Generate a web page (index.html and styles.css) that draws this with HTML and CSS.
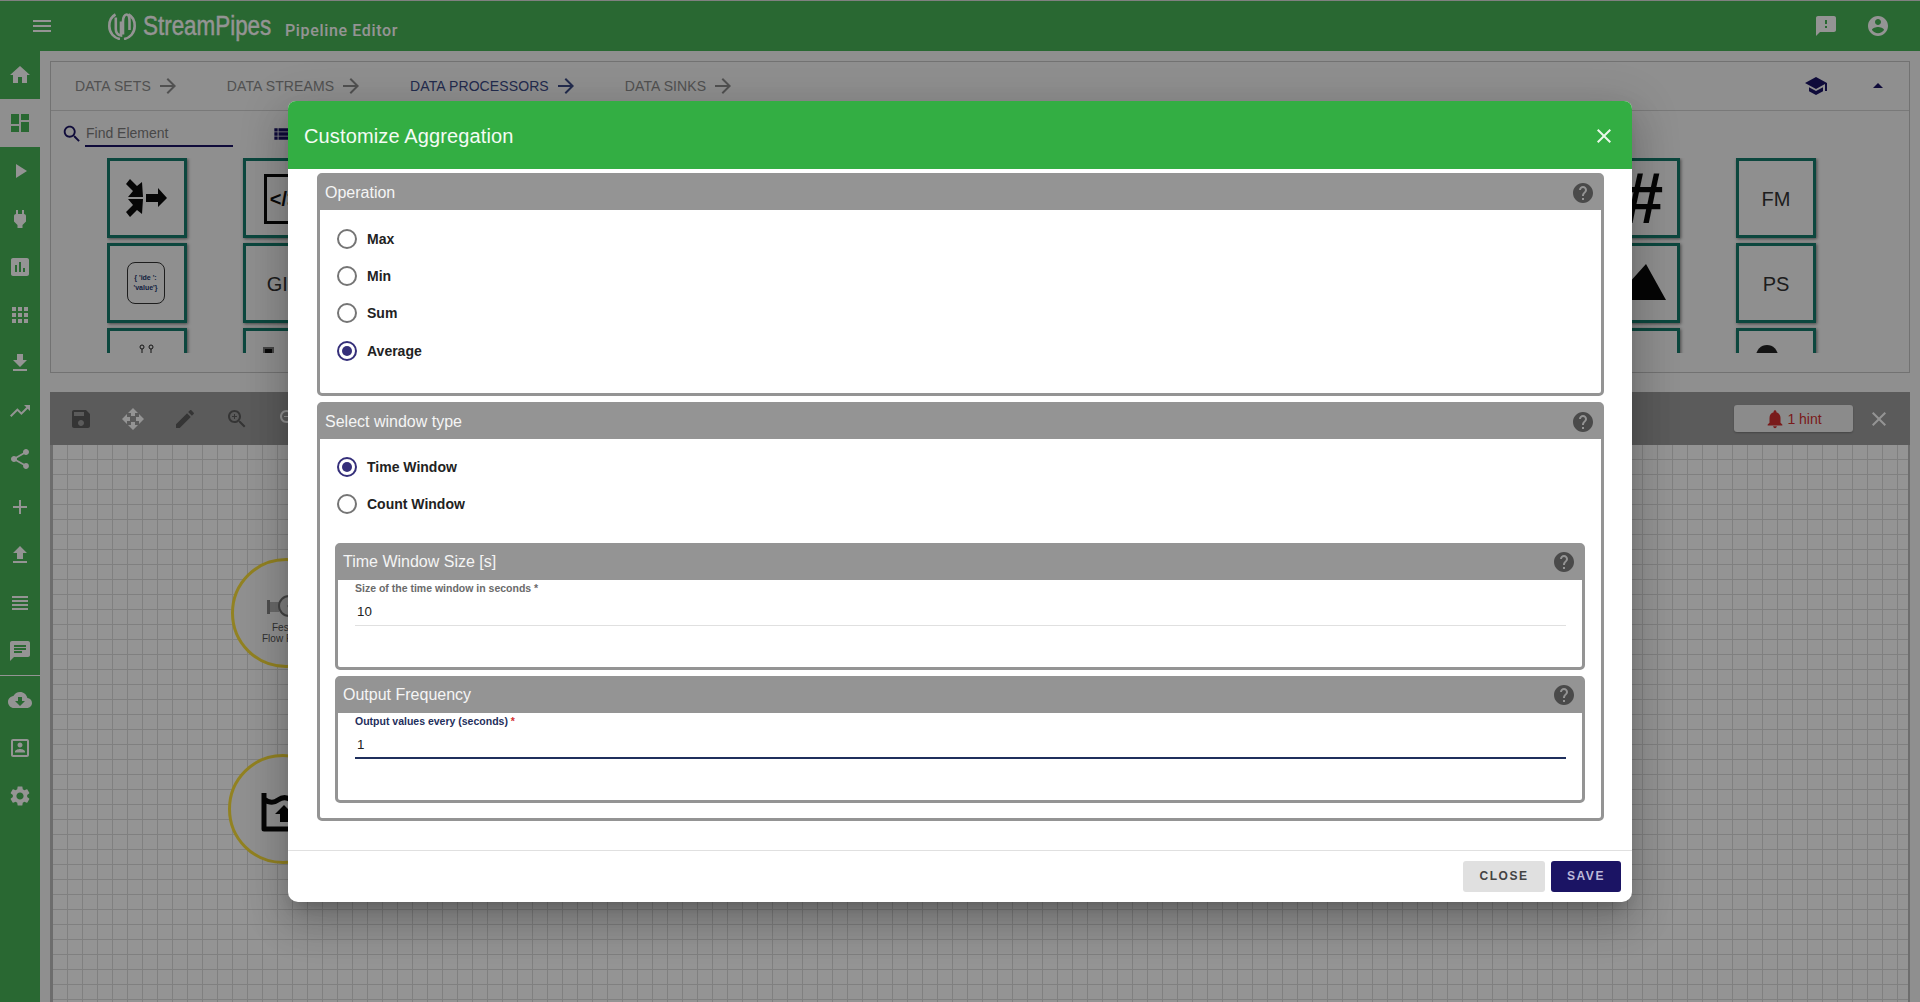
FILE: index.html
```html
<!DOCTYPE html>
<html lang="en">
<head>
<meta charset="utf-8">
<title>StreamPipes Pipeline Editor</title>
<link rel="stylesheet" href="styles.css">
</head>
<body>
<svg class="defs" width="0" height="0" aria-hidden="true">
  <symbol id="i-menu" viewBox="0 0 24 24"><path d="M3 18h18v-2H3v2zm0-5h18v-2H3v2zm0-7v2h18V6H3z"/></symbol>
  <symbol id="i-home" viewBox="0 0 24 24"><path d="M10 20v-6h4v6h5v-8h3L12 3 2 12h3v8z"/></symbol>
  <symbol id="i-dash" viewBox="0 0 24 24"><path d="M3 13h8V3H3v10zm0 8h8v-6H3v6zm10 0h8V11h-8v10zm0-18v6h8V3h-8z"/></symbol>
  <symbol id="i-play" viewBox="0 0 24 24"><path d="M8 5v14l11-7z"/></symbol>
  <symbol id="i-power" viewBox="0 0 24 24"><path d="M16.01 7L16 3h-2v4h-4V3H8v4h-.01C7 6.99 6 7.99 6 8.99v5.49L9.5 18v3h5v-3l3.5-3.51v-5.5c0-1-1-2-1.99-1.99z"/></symbol>
  <symbol id="i-chart" viewBox="0 0 24 24"><path d="M19 3H5c-1.1 0-2 .9-2 2v14c0 1.1.9 2 2 2h14c1.1 0 2-.9 2-2V5c0-1.1-.9-2-2-2zM9 17H7v-7h2v7zm4 0h-2V7h2v10zm4 0h-2v-4h2v4z"/></symbol>
  <symbol id="i-apps" viewBox="0 0 24 24"><path d="M4 8h4V4H4v4zm6 12h4v-4h-4v4zm-6 0h4v-4H4v4zm0-6h4v-4H4v4zm6 0h4v-4h-4v4zm6-10v4h4V4h-4zm-6 4h4V4h-4v4zm6 6h4v-4h-4v4zm0 6h4v-4h-4v4z"/></symbol>
  <symbol id="i-down" viewBox="0 0 24 24"><path d="M19 9h-4V3H9v6H5l7 7 7-7zM5 18v2h14v-2H5z"/></symbol>
  <symbol id="i-trend" viewBox="0 0 24 24"><path d="M16 6l2.29 2.29-4.88 4.88-4-4L2 16.59 3.41 18l6-6 4 4 6.3-6.29L22 12V6z"/></symbol>
  <symbol id="i-share" viewBox="0 0 24 24"><path d="M18 16.08c-.76 0-1.44.3-1.96.77L8.91 12.7c.05-.23.09-.46.09-.7s-.04-.47-.09-.7l7.05-4.11c.54.5 1.25.81 2.04.81 1.66 0 3-1.34 3-3s-1.34-3-3-3-3 1.34-3 3c0 .24.04.47.09.7L8.04 9.81C7.5 9.31 6.79 9 6 9c-1.66 0-3 1.34-3 3s1.34 3 3 3c.79 0 1.5-.31 2.04-.81l7.12 4.16c-.05.21-.08.43-.08.65 0 1.61 1.31 2.92 2.92 2.92 1.61 0 2.92-1.31 2.92-2.92s-1.31-2.92-2.92-2.92z"/></symbol>
  <symbol id="i-add" viewBox="0 0 24 24"><path d="M19 13h-6v6h-2v-6H5v-2h6V5h2v6h6v2z"/></symbol>
  <symbol id="i-up" viewBox="0 0 24 24"><path d="M9 16h6v-6h4l-7-7-7 7h4zm-4 2h14v2H5z"/></symbol>
  <symbol id="i-lines" viewBox="0 0 24 24"><path d="M4 15h16v-2H4v2zm0 4h16v-2H4v2zm0-8h16V9H4v2zm0-6v2h16V5H4z"/></symbol>
  <symbol id="i-chat" viewBox="0 0 24 24"><path d="M20 2H4c-1.100 0-1.990.9-1.990 2L2 22l4-4h14c1.100 0 2-.9 2-2V4c0-1.100-.9-2-2-2zM6 9h12v2H6V9zm8 5H6v-2h8v2zm4-6H6V6h12v2z"/></symbol>
  <symbol id="i-cloud" viewBox="0 0 24 24"><path d="M19.350 10.040C18.670 6.590 15.640 4 12 4 9.110 4 6.600 5.640 5.350 8.040 2.340 8.360 0 10.910 0 14c0 3.310 2.690 6 6 6h13c2.760 0 5-2.240 5-5 0-2.640-2.050-4.780-4.650-4.960zM17 13l-5 5-5-5h3V9h4v4h3z"/></symbol>
  <symbol id="i-portrait" viewBox="0 0 24 24"><path d="M19 3H5c-1.100 0-2 .9-2 2v14c0 1.100.9 2 2 2h14c1.100 0 2-.9 2-2V5c0-1.100-.9-2-2-2zm0 16H5V5h14v14zM12 11.500c1.400 0 2.500-1.100 2.500-2.500S13.400 6.500 12 6.500 9.500 7.600 9.500 9s1.100 2.500 2.500 2.500zm5 5v-1c0-1.700-3.300-2.600-5-2.600s-5 .9-5 2.600v1z"/></symbol>
  <symbol id="i-gear" viewBox="0 0 24 24"><path d="M19.140 12.940c.04-.3.06-.61.06-.94 0-.32-.02-.64-.07-.94l2.030-1.580c.18-.14.23-.41.12-.61l-1.920-3.320c-.12-.22-.37-.29-.59-.22l-2.390.96c-.5-.38-1.030-.7-1.620-.94l-.36-2.540c-.04-.24-.24-.41-.48-.41h-3.840c-.24 0-.43.17-.47.41l-.36 2.540c-.59.24-1.130.57-1.620.94l-2.390-.96c-.22-.08-.47 0-.59.22L2.740 8.870c-.12.21-.08.47.12.61l2.030 1.580c-.05.3-.09.63-.09.94s.02.64.07.94l-2.030 1.580c-.18.14-.23.41-.12.61l1.920 3.320c.12.22.37.29.59.22l2.390-.96c.5.38 1.030.7 1.620.94l.36 2.540c.05.24.24.41.48.41h3.840c.24 0 .44-.17.47-.41l.36-2.540c.59-.24 1.130-.56 1.620-.94l2.390.96c.22.08.47 0 .59-.22l1.920-3.320c.12-.22.07-.47-.12-.61l-2.010-1.580zM12 15.600c-1.980 0-3.600-1.620-3.600-3.600s1.620-3.600 3.600-3.600 3.600 1.620 3.600 3.600-1.620 3.600-3.600 3.600z"/></symbol>
  <symbol id="i-feedback" viewBox="0 0 24 24"><path d="M20 2H4c-1.100 0-1.990.9-1.990 2L2 22l4-4h14c1.100 0 2-.9 2-2V4c0-1.100-.9-2-2-2zm-7 12h-2v-2h2v2zm0-4h-2V6h2v4z"/></symbol>
  <symbol id="i-account" viewBox="0 0 24 24"><path d="M12 2C6.480 2 2 6.480 2 12s4.480 10 10 10 10-4.480 10-10S17.520 2 12 2zm0 3c1.660 0 3 1.340 3 3s-1.340 3-3 3-3-1.340-3-3 1.340-3 3-3zm0 14.200c-2.500 0-4.710-1.280-6-3.220.03-1.990 4-3.080 6-3.080 1.990 0 5.970 1.090 6 3.080-1.290 1.940-3.500 3.220-6 3.220z"/></symbol>
  <symbol id="i-school" viewBox="0 0 24 24"><path d="M5 13.180v4L12 21l7-3.820v-4L12 17l-7-3.820zM12 3L1 9l11 6 9-4.910V17h2V9L12 3z"/></symbol>
  <symbol id="i-caret" viewBox="0 0 24 24"><path d="M7 14l5-5 5 5z"/></symbol>
  <symbol id="i-arrow" viewBox="0 0 24 24"><path d="M12 4l-1.410 1.410L16.170 11H4v2h12.170l-5.580 5.590L12 20l8-8z"/></symbol>
  <symbol id="i-search" viewBox="0 0 24 24"><path d="M15.500 14h-.79l-.28-.27C15.410 12.590 16 11.110 16 9.500 16 5.910 13.090 3 9.500 3S3 5.910 3 9.500 5.910 16 9.500 16c1.610 0 3.090-.59 4.230-1.570l.27.28v.79l5 4.990L20.490 19l-4.990-5zm-6 0C7.010 14 5 11.990 5 9.500S7.010 5 9.500 5 14 7.010 14 9.500 11.990 14 9.500 14z"/></symbol>
  <symbol id="i-list" viewBox="0 0 24 24"><path d="M4 14h4v-4H4v4zm0 5h4v-4H4v4zM4 9h4V5H4v4zm5 5h12v-4H9v4zm0 5h12v-4H9v4zM9 5v4h12V5H9z"/></symbol>
  <symbol id="i-close" viewBox="0 0 24 24"><path d="M19 6.410L17.590 5 12 10.590 6.410 5 5 6.410 10.590 12 5 17.590 6.410 19 12 13.410 17.590 19 19 17.590 13.410 12z"/></symbol>
  <symbol id="i-help" viewBox="0 0 24 24"><path d="M12 2C6.480 2 2 6.480 2 12s4.480 10 10 10 10-4.480 10-10S17.520 2 12 2zm1 17h-2v-2h2v2zm2.070-7.750l-.9.920C13.450 12.900 13 13.500 13 15h-2v-.5c0-1.100.45-2.100 1.170-2.830l1.240-1.260c.37-.36.59-.86.59-1.410 0-1.100-.9-2-2-2s-2 .9-2 2H8c0-2.210 1.790-4 4-4s4 1.790 4 4c0 .88-.36 1.680-.93 2.250z"/></symbol>
  <symbol id="i-save" viewBox="0 0 24 24"><path d="M17 3H5c-1.110 0-2 .9-2 2v14c0 1.100.89 2 2 2h14c1.100 0 2-.9 2-2V7l-4-4zm-5 16c-1.660 0-3-1.340-3-3s1.340-3 3-3 3 1.340 3 3-1.340 3-3 3zm3-10H5V5h10v4z"/></symbol>
  <symbol id="i-move" viewBox="0 0 24 24"><path d="M10 9h4V6h3l-5-5-5 5h3v3zm-1 1H6V7l-5 5 5 5v-3h3v-4zm14 2l-5-5v3h-3v4h3v3l5-5zm-9 3h-4v3H7l5 5 5-5h-3v-3z"/></symbol>
  <symbol id="i-edit" viewBox="0 0 24 24"><path d="M3 17.250V21h3.750L17.810 9.940l-3.750-3.750L3 17.250zM20.710 7.040c.39-.39.39-1.020 0-1.410l-2.340-2.340c-.39-.39-1.020-.39-1.410 0l-1.830 1.830 3.750 3.750 1.830-1.830z"/></symbol>
  <symbol id="i-zoomin" viewBox="0 0 24 24"><path d="M15.500 14h-.79l-.28-.27C15.410 12.590 16 11.110 16 9.500 16 5.910 13.090 3 9.500 3S3 5.910 3 9.500 5.910 16 9.500 16c1.610 0 3.090-.59 4.230-1.570l.27.28v.79l5 4.990L20.490 19l-4.990-5zm-6 0C7.010 14 5 11.990 5 9.500S7.010 5 9.500 5 14 7.010 14 9.500 11.990 14 9.500 14zM12 10h-2v2H9v-2H7V9h2V7h1v2h2v1z"/></symbol>
  <symbol id="i-zoomout" viewBox="0 0 24 24"><path d="M15.500 14h-.79l-.28-.27C15.410 12.590 16 11.110 16 9.500 16 5.910 13.090 3 9.500 3S3 5.910 3 9.500 5.910 16 9.500 16c1.610 0 3.090-.59 4.230-1.570l.27.28v.79l5 4.990L20.490 19l-4.990-5zm-6 0C7.010 14 5 11.990 5 9.500S7.010 5 9.500 5 14 7.010 14 9.500 11.990 14 9.500 14zM7 9h5v1H7z"/></symbol>
  <symbol id="i-bell" viewBox="0 0 24 24"><path d="M12 22c1.100 0 2-.9 2-2h-4c0 1.100.89 2 2 2zm6-6v-5c0-3.070-1.640-5.640-4.500-6.320V4c0-.83-.67-1.500-1.500-1.500s-1.500.67-1.500 1.500v.68C7.630 5.360 6 7.920 6 11v5l-2 2v1h16v-1l-2-2z"/></symbol>
</svg>

<div class="app">
  <header class="topbar">
    <button class="bar-btn menu-btn"><svg class="ic"><use href="#i-menu"/></svg></button>
    <div class="brand">
      <svg class="logo" viewBox="0 0 28 28"><g fill="none" stroke="currentColor" stroke-width="2.600"><path d="M7.500 2.500C3.500 4.500 1.300 8.500 1.300 14c0 7 4.700 12 10.700 13"/><path d="M20.500 2.500C24.500 4.500 26.700 8.500 26.700 14c0 7-4.700 12-10.700 13"/><path d="M7.800 5.500V17c0 3.500 2.200 6 5.200 6.500V9.500"/><path d="M15 22.500V9c0-3.500 1.700-6.500 3.500-6.500S21.500 5.500 21.500 9v9"/></g></svg>
      <span class="brand-name">StreamPipes</span>
    </div>
    <span class="page-title">Pipeline Editor</span>
    <div class="top-actions">
      <svg class="ic"><use href="#i-feedback"/></svg>
      <svg class="ic"><use href="#i-account"/></svg>
    </div>
  </header>

  <div class="main">
    <nav class="sidebar">
      <a class="nav-item"><svg class="ic"><use href="#i-home"/></svg></a>
      <a class="nav-item active"><svg class="ic"><use href="#i-dash"/></svg></a>
      <a class="nav-item"><svg class="ic"><use href="#i-play"/></svg></a>
      <a class="nav-item"><svg class="ic"><use href="#i-power"/></svg></a>
      <a class="nav-item"><svg class="ic"><use href="#i-chart"/></svg></a>
      <a class="nav-item"><svg class="ic"><use href="#i-apps"/></svg></a>
      <a class="nav-item"><svg class="ic"><use href="#i-down"/></svg></a>
      <a class="nav-item"><svg class="ic"><use href="#i-trend"/></svg></a>
      <a class="nav-item"><svg class="ic"><use href="#i-share"/></svg></a>
      <a class="nav-item"><svg class="ic"><use href="#i-add"/></svg></a>
      <a class="nav-item"><svg class="ic"><use href="#i-up"/></svg></a>
      <a class="nav-item"><svg class="ic"><use href="#i-lines"/></svg></a>
      <a class="nav-item"><svg class="ic"><use href="#i-chat"/></svg></a>
      <div class="nav-divider"></div>
      <a class="nav-item"><svg class="ic"><use href="#i-cloud"/></svg></a>
      <a class="nav-item"><svg class="ic"><use href="#i-portrait"/></svg></a>
      <a class="nav-item"><svg class="ic"><use href="#i-gear"/></svg></a>
    </nav>

    <main class="content">
      <section class="palette">
        <div class="tabs">
          <span class="tab">DATA SETS <svg class="ic"><use href="#i-arrow"/></svg></span>
          <span class="tab">DATA STREAMS <svg class="ic"><use href="#i-arrow"/></svg></span>
          <span class="tab tab-active">DATA PROCESSORS <svg class="ic"><use href="#i-arrow"/></svg></span>
          <span class="tab">DATA SINKS <svg class="ic"><use href="#i-arrow"/></svg></span>
          <span class="tab-tools">
            <svg class="ic navy"><use href="#i-school"/></svg>
            <svg class="ic navy"><use href="#i-caret"/></svg>
          </span>
        </div>
        <div class="search-row">
          <svg class="ic navy search-ic"><use href="#i-search"/></svg>
          <span class="search-input">Find Element</span>
          <svg class="ic navy list-ic"><use href="#i-list"/></svg>
        </div>
        <div class="tiles">
          <div class="tile c1">
            <svg class="tile-svg" viewBox="0 0 42 38"><path d="M0 5L4 0l7 7 5-4 1 15H2l5-6zM0 33l4 5 7-7 5 4 1-15H2l5 6z" fill="#0c0c0c"/><path d="M0 19h18" stroke="#f6f6f6" stroke-width="2"/><path d="M20 15h12V9l9 10-9 9v-5H20z" fill="#0c0c0c"/></svg>
          </div>
          <div class="tile c2"><span class="code-box">&lt;/&gt;</span></div>
          <div class="tile c12"><span class="tile-hash">#</span></div>
          <div class="tile c13"><span class="tile-text">FM</span></div>

          <div class="tile c1"><span class="json-box">{ 'ide ':<br>'value'}</span></div>
          <div class="tile c2"><span class="tile-text gi">GI</span></div>
          <div class="tile c12"><svg class="mountain" viewBox="0 0 66 36"><path d="M0 36L20 10l8 10L46 0l20 36z" fill="#0c0c0c"/></svg></div>
          <div class="tile c13"><span class="tile-text">PS</span></div>

          <div class="tile c1"><svg class="pins" viewBox="0 0 20 10"><circle cx="5" cy="3" r="2" fill="none" stroke="#222"/><path d="M5 5v5" stroke="#222"/><circle cx="14" cy="3" r="2" fill="none" stroke="#222"/><path d="M14 5v5" stroke="#222"/></svg></div>
          <div class="tile c2"><span class="mini-square"></span></div>
          <div class="tile c12"></div>
          <div class="tile c13"><span class="dome"></span></div>
        </div>
      </section>

      <section class="editor">
        <div class="toolbar">
          <svg class="ic tool dark"><use href="#i-save"/></svg>
          <svg class="ic tool"><use href="#i-move"/></svg>
          <svg class="ic tool dark"><use href="#i-edit"/></svg>
          <svg class="ic tool dark"><use href="#i-zoomin"/></svg>
          <svg class="ic tool"><use href="#i-zoomout"/></svg>
          <span class="hint"><svg class="ic ic-bell"><use href="#i-bell"/></svg>1 hint</span>
          <svg class="ic tool-close"><use href="#i-close"/></svg>
        </div>
        <div class="canvas">
          <div class="node node-a">
            <svg class="node-pipe" viewBox="0 0 40 24"><rect x="0" y="6" width="3" height="14" fill="#888"/><rect x="3" y="8" width="9" height="10" fill="#b5b5b5"/><circle cx="22" cy="12" r="10" fill="#ddd" stroke="#777" stroke-width="2"/><circle cx="22" cy="12" r="1.500" fill="#555"/></svg>
            <span class="node-label">Festo<br>Flow Rate</span>
          </div>
          <div class="node node-b">
            <svg class="node-tank" viewBox="0 0 48 42"><path d="M3 2v36h40V8c-5 4-10 4-13 1-4-3-9-3-13 0-4 3-9 3-14-1" fill="none" stroke="#0c0c0c" stroke-width="5" stroke-linejoin="round"/><path d="M23 14l9 9h-5v8h-8v-8h-5z" fill="#0c0c0c"/></svg>
          </div>
        </div>
      </section>
    </main>
  </div>
</div>

<div class="backdrop"></div>

<div class="dialog">
  <div class="dialog-title">
    <span class="dialog-name">Customize Aggregation</span>
    <svg class="ic dialog-close"><use href="#i-close"/></svg>
  </div>
  <div class="dialog-body">
    <section class="group group-first">
      <div class="group-head"><span>Operation</span><svg class="ic help"><use href="#i-help"/></svg></div>
      <div class="group-content">
        <div class="radios">
          <label class="radio"><span class="dot"></span>Max</label>
          <label class="radio"><span class="dot"></span>Min</label>
          <label class="radio"><span class="dot"></span>Sum</label>
          <label class="radio on"><span class="dot"></span>Average</label>
        </div>
      </div>
    </section>
    <section class="group">
      <div class="group-head"><span>Select window type</span><svg class="ic help"><use href="#i-help"/></svg></div>
      <div class="group-content group-content-padded">
        <div class="radios radios-window">
          <label class="radio on"><span class="dot"></span>Time Window</label>
          <label class="radio"><span class="dot"></span>Count Window</label>
        </div>
        <section class="group sub">
          <div class="group-head"><span>Time Window Size [s]</span><svg class="ic help"><use href="#i-help"/></svg></div>
          <div class="field">
            <span class="field-label">Size of the time window in seconds <i>*</i></span>
            <span class="field-value">10</span>
          </div>
        </section>
        <section class="group sub">
          <div class="group-head"><span>Output Frequency</span><svg class="ic help"><use href="#i-help"/></svg></div>
          <div class="field focused">
            <span class="field-label">Output values every (seconds) <i>*</i></span>
            <span class="field-value">1</span>
          </div>
        </section>
      </div>
    </section>
  </div>
  <div class="dialog-actions">
    <button class="btn btn-close">CLOSE</button>
    <button class="btn btn-save">SAVE</button>
  </div>
</div>
</body>
</html>
```

FILE: styles.css
```css
* { box-sizing: border-box; }
html, body { margin: 0; height: 100%; overflow: hidden; }
body { font-family: "Liberation Sans", Arial, sans-serif; background: #f6f6f6; color: #222; position: relative; }
.defs { position: absolute; }
.ic { width: 24px; height: 24px; fill: currentColor; flex: none; display: block; }
.navy { color: #1b1464; }

.app { display: flex; flex-direction: column; height: 1002px; }
.topbar { height: 51px; flex: none; background: #47b356; border-top: 1px solid #ddd; color: #fff; display: flex; align-items: center; }
.bar-btn { background: none; border: 0; color: inherit; padding: 0; }
.menu-btn { margin-left: 30px; width: 24px; height: 24px; }
.brand { margin-left: 54px; display: flex; align-items: center; width: 177px; }
.logo { width: 28px; height: 28px; margin-right: 7px; flex: none; }
.brand-name { font-size: 27px; -webkit-text-stroke: .4px currentColor; transform: scaleX(.83); transform-origin: left center; white-space: nowrap; }
.page-title { font-family: Roboto, sans-serif; font-weight: 500; font-size: 16px; letter-spacing: .65px; margin-top: 8px; }
.top-actions { margin-left: auto; margin-right: 30px; display: flex; gap: 28px; }

.main { flex: 1; display: flex; min-height: 0; }
.sidebar { width: 40px; flex: none; background: #47b356; color: #fff; }
.nav-item { height: 48px; display: flex; align-items: center; justify-content: center; }
.nav-item.active { background: #f6f6f6; color: #47b356; }
.nav-divider { height: 1px; background: #fff; }

.content { flex: 1; min-width: 0; padding: 10px 10px 0; display: flex; flex-direction: column; gap: 19px; }
.palette { height: 312px; flex: none; border: 1px solid #c4c4c4; display: flex; flex-direction: column; }
.tabs { height: 49px; flex: none; border-bottom: 1px solid #d0d0d0; display: flex; align-items: center; padding-left: 24px; gap: 47px; }
.tab { display: flex; align-items: center; gap: 5px; font-size: 14px; letter-spacing: .1px; color: #8c8c8c; white-space: nowrap; }
.tab-active { color: #3b4a86; }
.tab-tools { margin-left: auto; margin-right: 19px; display: flex; gap: 38px; }
.search-row { height: 47px; flex: none; display: flex; align-items: center; padding-left: 10px; }
.search-ic { width: 22px; height: 22px; margin-top: -2px; }
.search-input { width: 148px; margin-left: 2px; height: 24px; border-bottom: 2px solid #1b1464; font-size: 14px; line-height: 20px; color: #7d7d7d; padding-left: 1px; }
.list-ic { margin-left: 38px; width: 20px; height: 20px; margin-top: -2px; }

.tiles { display: grid; grid-template-columns: repeat(13, 80px); column-gap: 55.750px; row-gap: 5px; grid-auto-rows: 80px; margin-left: 56px; height: 195px; overflow: hidden; }
.tile { border: 3px solid #157a6c; box-shadow: 1px 1px 3px rgba(0,0,0,.5); display: flex; align-items: center; justify-content: center; overflow: hidden; position: relative; }
.c1 { grid-column: 1; }
.c2 { grid-column: 2; }
.c12 { grid-column: 12; }
.c13 { grid-column: 13; }
.tile-svg { width: 42px; height: 38px; }
.tile-text { font-size: 20px; color: #333; margin-top: 3px; }
.gi { margin-right: auto; margin-left: 21px; }
.tile-hash { font-size: 72px; font-weight: 700; color: #0c0c0c; line-height: 1; margin-left: 6px; }
.code-box { width: 50px; height: 50px; border: 3px solid #0c0c0c; font-size: 20px; font-weight: 700; color: #111; display: flex; align-items: center; justify-content: flex-start; padding-left: 3px; margin-left: 12px; margin-top: 2px; }
.json-box { width: 38px; height: 42px; border: 1px solid #333; border-radius: 8px; font-size: 7px; font-weight: 700; color: #24386e; line-height: 10px; text-align: center; display: flex; align-items: center; justify-content: center; margin-left: -3px; }
.mountain { width: 66px; height: 36px; margin-left: -14px; margin-top: -3px; }
.pins { width: 20px; height: 10px; align-self: flex-start; margin-top: 13px; }
.mini-square { width: 11px; height: 9px; background: #111; border: 2px solid #777; position: absolute; top: 16px; left: 17px; }
.dome { width: 22px; height: 22px; border-radius: 50%; background: #222; position: absolute; top: 14px; left: 17px; }

.editor { flex: 1; display: flex; flex-direction: column; min-height: 0; }
.toolbar { height: 53px; flex: none; background: #9e9e9e; display: flex; align-items: center; padding-left: 19px; color: #fff; }
.tool { margin-right: 28px; }
.tool.dark { color: #5c5c5c; }
.hint { margin-left: auto; width: 119px; height: 27px; border-radius: 3px; background: #efefef; box-shadow: 0 1px 2px rgba(0,0,0,.25); color: #d32f2f; font-size: 14px; display: flex; align-items: center; justify-content: center; padding-left: 2px; }
.ic-bell { color: #d32f2f; width: 22px; height: 22px; margin-left: -3px; margin-right: 1px; }
.tool-close { margin: 0 19px 0 14px; }
.canvas { flex: 1; position: relative; border: solid #bcbcbc; border-width: 0 2px 0 3px; background-color: #fff; background-image: linear-gradient(#dcdcdc 1px, transparent 1px), linear-gradient(90deg, #dcdcdc 1px, transparent 1px); background-size: 15px 15px; background-position: -1px 14px; }
.node { position: absolute; width: 110px; height: 110px; border: 3px solid #fbe13c; border-radius: 50%; background: #f8f8f8; }
.node-a { left: 178px; top: 113px; }
.node-b { left: 175px; top: 309px; }
.node-pipe { position: absolute; left: 33px; top: 33px; width: 40px; height: 24px; }
.node-label { position: absolute; left: 28px; top: 61px; font-size: 10px; line-height: 11px; color: #555; text-align: center; white-space: nowrap; }
.node-tank { position: absolute; left: 30px; top: 34px; width: 48px; height: 42px; }

.backdrop { position: absolute; inset: 0; background: rgba(0,0,0,.42); }

.dialog { position: absolute; left: 288px; top: 101px; width: 1344px; height: 801px; background: #fff; border-radius: 8px 8px 10px 10px; box-shadow: 0 11px 15px -7px rgba(0,0,0,.2), 0 24px 38px 3px rgba(0,0,0,.14), 0 9px 46px 8px rgba(0,0,0,.12); display: flex; flex-direction: column; overflow: hidden; }
.dialog-title { height: 68px; flex: none; background: #33ae43; color: #f4fbf4; font-size: 20px; display: flex; align-items: center; justify-content: space-between; padding: 3px 16px 0; }
.dialog-name { letter-spacing: .13px; }
.dialog-close { color: #eaf7ea; margin-top: -1px; }
.dialog-body { flex: 1; min-height: 0; padding: 4px 28px 0 29px; }
.group { border: 3px solid #949494; border-radius: 5px; margin-top: 6px; }
.group-first { margin-top: 0; height: 223px; }
.group-head { background: #949494; color: #f5f5f5; font-size: 16px; display: flex; align-items: center; justify-content: space-between; padding: 0 6px 0 5px; margin-top: -1px; height: 35px; }
.group-content { padding: 0 16px 0 15px; }
.group-content-padded { padding-bottom: 15px; }
.help { color: #4a4a4a; margin-right: 0; }
.radios { padding-top: 10px; }
.radios-window { padding-top: 9px; padding-bottom: 14px; }
.radio { height: 37.330px; display: flex; align-items: center; font-size: 14px; font-weight: 700; color: #222; gap: 10px; }
.dot { width: 20px; height: 20px; border: 2px solid #757575; border-radius: 50%; flex: none; position: relative; margin-left: 2px; }
.on .dot { border-color: #352f7a; }
.on .dot::after { content: ""; position: absolute; left: 3px; top: 3px; width: 10px; height: 10px; border-radius: 50%; background: #352f7a; }
.field { height: 87px; padding: 0 16px 0 17px; display: flex; flex-direction: column; }
.field-label { font-size: 10.500px; font-weight: 700; color: #6b6b6b; margin-top: 2px; height: 13px; line-height: 13px; white-space: nowrap; }
.field-label i { color: #6b6b6b; font-style: normal; }
.field-value { font-size: 13.330px; color: #222; height: 31px; padding: 7px 2px 0; line-height: 20px; border-bottom: 1px solid #e0e0e0; }
.focused .field-label { color: #1f2f5c; }
.focused .field-label i { color: #d32f2f; }
.focused .field-value { border-bottom: 2px solid #1f2f5c; }

.dialog-actions { height: 52px; flex: none; border-top: 1px solid #e0e0e0; display: flex; justify-content: flex-end; align-items: flex-start; gap: 6px; padding: 10px 11px 0 0; }
.btn { height: 31px; border: 0; border-radius: 3px; font-family: "Liberation Sans", Arial, sans-serif; font-size: 12px; font-weight: 700; letter-spacing: 1.500px; padding: 0 0 1px; }
.btn-close { width: 82px; background: #e0e0e0; color: #444; }
.btn-save { width: 70px; background: #1b1464; color: #bdb9da; }
```
